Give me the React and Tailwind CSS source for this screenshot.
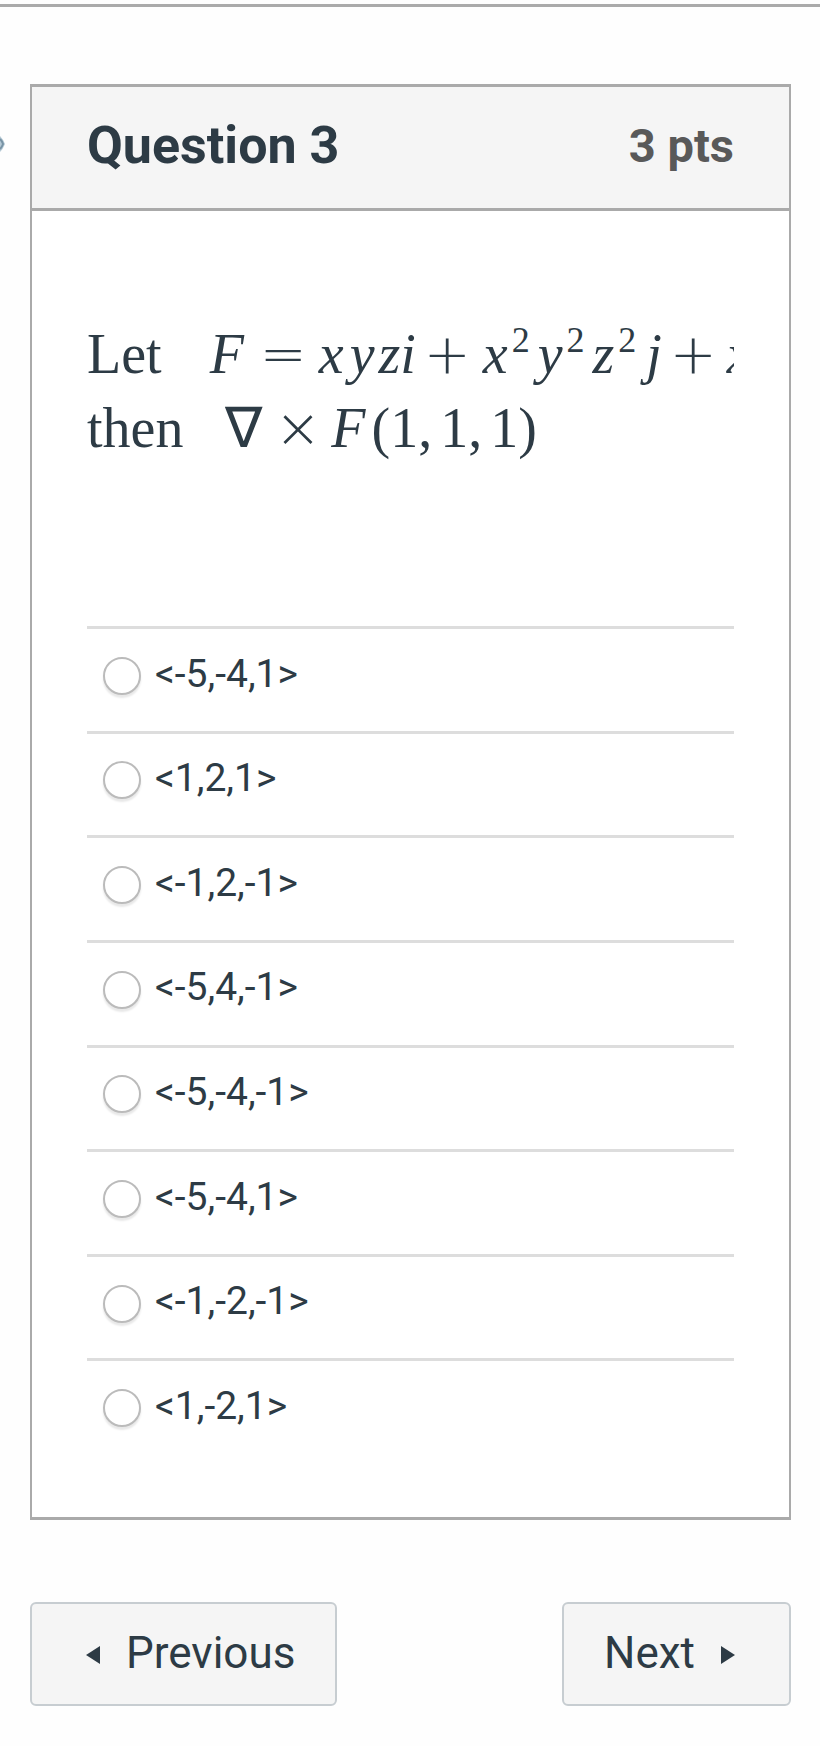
import React from "react";

const answers = [
  "<-5,-4,1>",
  "<1,2,1>",
  "<-1,2,-1>",
  "<-5,4,-1>",
  "<-5,-4,-1>",
  "<-5,-4,1>",
  "<-1,-2,-1>",
  "<1,-2,1>",
];

function Var({ children, className = "" }) {
  return <i className={className}>{children}</i>;
}

function Op({ children, className = "" }) {
  return (
    <span className={`font-['DejaVu_Sans',sans-serif] font-extralight ${className}`}>
      {children}
    </span>
  );
}

function Squared() {
  return <sup className="top-0 ml-1 self-start text-[36px] leading-[46px]">2</sup>;
}

function Formula() {
  return (
    <div className="overflow-hidden font-['Liberation_Serif',serif] text-[56px] leading-[74px]">
      <div className="flex items-baseline whitespace-nowrap">
        <span>Let</span>
        <Var className="ml-12">F</Var>
        <Op className="ml-4">=</Op>
        <Var className="ml-3">x</Var>
        <Var className="ml-1.5">y</Var>
        <Var className="ml-1">z</Var>
        <Var>i</Var>
        <Op className="ml-2">+</Op>
        <Var className="ml-3">x</Var>
        <Squared />
        <Var className="ml-2">y</Var>
        <Squared />
        <Var className="ml-2">z</Var>
        <Squared />
        <Var className="ml-2.5">j</Var>
        <Op className="ml-2">+</Op>
        <Var className="ml-2.5">x</Var>
      </div>
      <div className="flex items-baseline whitespace-nowrap">
        <span>then</span>
        <span className="ml-[42px]">∇</span>
        <Op className="ml-3">×</Op>
        <Var className="ml-2.5">F</Var>
        <span className="ml-1.5">(</span>
        <span>1,</span>
        <span className="ml-2">1,</span>
        <span className="ml-2">1</span>
        <span>)</span>
      </div>
    </div>
  );
}

const buttonClass =
  "flex h-[104px] items-center gap-[26px] rounded-[6px] border-2 border-[#c7cdd1] bg-[#f5f5f5] pb-0.5 text-[44px]";

export default function App() {
  return (
    <main className="min-h-screen bg-[#fefefe] pt-1 font-['Roboto',sans-serif] text-[#2d3b45]">
      <div className="border-t-3 border-[#aaaaaa]" />
      <div className="relative pt-[77px] pr-[29px] pb-10 pl-[30px]">
        <svg
          className="absolute top-[129px] left-0 h-4 w-[5px]"
          viewBox="0 0 5 16"
          aria-hidden="true"
        >
          <path d="M0 0Q3 3 5 8Q3 13 0 16Z" fill="#b5c9d5" />
          <path d="M0 3Q2 5 3 8Q2 11 0 13" fill="none" stroke="#7893a5" strokeWidth="2" />
        </svg>
        <section className="border-2 border-t-3 border-b-3 border-[#aaaaaa] bg-white">
          <header className="flex h-[124px] items-center justify-between border-b-3 border-[#aaaaaa] bg-[#f5f5f5] px-[55px] pb-1 font-bold">
            <h1 className="text-[52px] leading-none">Question 3</h1>
            <span className="text-[47px] leading-none text-[#595959]">3 pts</span>
          </header>
          <div className="px-[55px] pt-[106px] pb-[54px]">
            <Formula />
            <fieldset className="mt-[161px]" aria-label="Answer choices">
              <div className="grid min-h-[837px] auto-rows-fr">
                {answers.map((answer, i) => (
                  <label
                    key={i}
                    className="flex items-center gap-[14px] border-t-3 border-[#dddddd] pb-3 pl-4 text-[39px]"
                  >
                    <input
                      type="radio"
                      name="answer"
                      className="mt-1 size-[38px] appearance-none rounded-full border-2 border-[#bbbbbb] bg-white shadow-[0_3px_2px_#e8e8e8] checked:bg-[#2d3b45]"
                    />
                    <span>{answer}</span>
                  </label>
                ))}
              </div>
            </fieldset>
          </div>
        </section>
        <nav className="mt-[82px] flex justify-between">
          <button type="button" className={`${buttonClass} pr-10 pl-[54px]`}>
            <svg className="mt-1 h-[18px] w-3.5" viewBox="0 0 14 18" aria-hidden="true">
              <path d="M14 0V18L0 9Z" fill="currentColor" />
            </svg>
            Previous
          </button>
          <button type="button" className={`${buttonClass} pr-[54px] pl-10`}>
            Next
            <svg className="mt-1 h-[18px] w-3.5" viewBox="0 0 14 18" aria-hidden="true">
              <path d="M0 0V18L14 9Z" fill="currentColor" />
            </svg>
          </button>
        </nav>
      </div>
    </main>
  );
}
